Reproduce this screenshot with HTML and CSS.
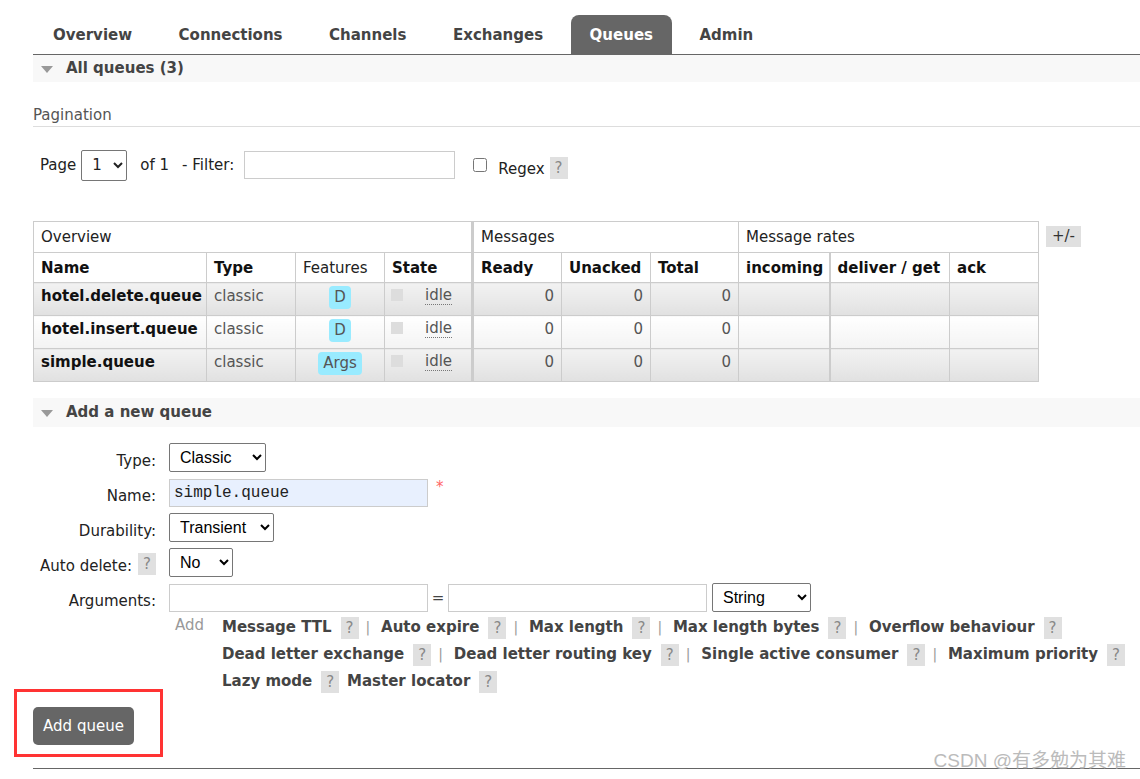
FILE: index.html
```html
<!DOCTYPE html>
<html>
<head>
<meta charset="utf-8">
<link rel="stylesheet" href="styles.css">
</head>
<body>
<div class="page">
  <nav class="tabs">
    <a class="tab">Overview</a>
    <a class="tab">Connections</a>
    <a class="tab">Channels</a>
    <a class="tab">Exchanges</a>
    <a class="tab active">Queues</a>
    <a class="tab">Admin</a>
  </nav>

  <div class="section-head"><span class="tri"></span>All queues (3)</div>

  <div class="pagination-title">Pagination</div>

  <div class="pager">
    <span>Page</span>
    <select class="page-select"><option>1</option></select>
    <span class="of">of 1</span>
    <span>- Filter:</span>
    <input class="filter" type="text">
    <input class="regex-box" type="checkbox">
    <span class="regex">Regex</span>
    <span class="help">?</span>
  </div>

  <div class="table-wrap">
    <table class="queues">
      <colgroup>
        <col style="width:173px"><col style="width:89px"><col style="width:89px"><col style="width:88px">
        <col style="width:89px"><col style="width:89px"><col style="width:88px">
        <col style="width:91px"><col style="width:120px"><col style="width:89px">
      </colgroup>
      <thead>
        <tr class="group">
          <th colspan="4">Overview</th>
          <th colspan="3" class="gsep">Messages</th>
          <th colspan="3">Message rates</th>
        </tr>
        <tr class="sub">
          <th>Name</th><th>Type</th><th class="normal">Features</th><th>State</th>
          <th class="gsep">Ready</th><th>Unacked</th><th>Total</th>
          <th>incoming</th><th class="rsep">deliver / get</th><th>ack</th>
        </tr>
      </thead>
      <tbody>
        <tr class="alt">
          <td class="qname">hotel.delete.queue</td><td class="muted">classic</td>
          <td class="center"><span class="badge">D</span></td>
          <td><span class="state"><span class="sq"></span><span class="idle">idle</span></span></td>
          <td class="num gsep">0</td><td class="num">0</td><td class="num">0</td>
          <td></td><td class="rsep"></td><td></td>
        </tr>
        <tr class="plain">
          <td class="qname">hotel.insert.queue</td><td class="muted">classic</td>
          <td class="center"><span class="badge">D</span></td>
          <td><span class="state"><span class="sq"></span><span class="idle">idle</span></span></td>
          <td class="num gsep">0</td><td class="num">0</td><td class="num">0</td>
          <td></td><td class="rsep"></td><td></td>
        </tr>
        <tr class="alt">
          <td class="qname">simple.queue</td><td class="muted">classic</td>
          <td class="center"><span class="badge">Args</span></td>
          <td><span class="state"><span class="sq"></span><span class="idle">idle</span></span></td>
          <td class="num gsep">0</td><td class="num">0</td><td class="num">0</td>
          <td></td><td class="rsep"></td><td></td>
        </tr>
      </tbody>
    </table>
    <span class="plusminus">+/-</span>
  </div>

  <div class="section-head second"><span class="tri"></span>Add a new queue</div>

  <form class="form">
    <label class="lbl">Type:</label>
    <div class="field"><select class="sel sel-type"><option>Classic</option></select></div>

    <label class="lbl">Name:</label>
    <div class="field"><input class="txt name" type="text" value="simple.queue"><span class="req">*</span></div>

    <label class="lbl">Durability:</label>
    <div class="field"><select class="sel sel-dur"><option>Transient</option></select></div>

    <label class="lbl">Auto delete: <span class="help">?</span></label>
    <div class="field"><select class="sel sel-no"><option>No</option></select></div>

    <label class="lbl">Arguments:</label>
    <div class="field">
      <input class="txt arg" type="text"><span class="eq">=</span><input class="txt arg" type="text">
      <select class="sel sel-str"><option>String</option></select>
    </div>

    <div></div>
    <div class="adds">
      <span class="add-word">Add</span>
      <div class="links">
        <span class="lnk">Message TTL</span><span class="help">?</span><span class="bar">|</span>
        <span class="lnk">Auto expire</span><span class="help">?</span><span class="bar">|</span>
        <span class="lnk">Max length</span><span class="help">?</span><span class="bar">|</span>
        <span class="lnk">Max length bytes</span><span class="help">?</span><span class="bar">|</span>
        <span class="lnk">Overflow behaviour</span><span class="help">?</span>
        <br>
        <span class="lnk">Dead letter exchange</span><span class="help">?</span><span class="bar">|</span>
        <span class="lnk">Dead letter routing key</span><span class="help">?</span><span class="bar">|</span>
        <span class="lnk">Single active consumer</span><span class="help">?</span><span class="bar">|</span>
        <span class="lnk">Maximum priority</span><span class="help">?</span>
        <br>
        <span class="lnk">Lazy mode</span><span class="help">?</span>
        <span class="lnk">Master locator</span><span class="help">?</span>
      </div>
    </div>
  </form>

  <div class="submit-row">
    <button class="btn" type="button">Add queue</button>
    <span class="highlight"></span>
  </div>

  <div class="footer-line"></div>
  <div class="watermark">CSDN @有多勉为其难</div>
</div>
</body>
</html>
```

FILE: styles.css
```css
* { box-sizing: border-box; }
html, body { margin: 0; padding: 0; background: #fff; }
body {
  font-family: "DejaVu Sans", Verdana, sans-serif;
  font-size: 15px;
  color: #444;
  width: 1140px;
  height: 779px;
  overflow: hidden;
}
.page { padding-left: 33px; position: relative; height: 779px; }

.tabs {
  display: flex;
  padding-top: 15px;
  padding-left: 1px;
  border-bottom: 1px solid #666;
  height: 55px;
  gap: 8.5px;
}
.tab {
  display: block;
  height: 39px;
  line-height: 40px;
  padding: 0 19px;
  font-weight: bold;
  font-size: 15px;
  color: #444;
  border-radius: 8px 8px 0 0;
}
.tab.active { background: #666; color: #fff; }

.section-head {
  height: 27px;
  line-height: 27px;
  background: #f8f8f8;
  font-weight: bold;
  font-size: 15px;
  color: #444;
  display: flex;
  align-items: center;
}
.tri {
  width: 0; height: 0;
  border-left: 6px solid transparent;
  border-right: 6px solid transparent;
  border-top: 7px solid #999;
  margin: 2px 13px 0 8px;
}

.pagination-title {
  margin-top: 24px;
  font-size: 15px;
  color: #555;
  border-bottom: 1px solid #ddd;
  height: 21px;
}

.pager {
  display: flex;
  align-items: center;
  margin-top: 22px;
  padding-left: 7px;
  font-size: 15px;
  color: #222;
  height: 32px;
}
.page-select {
  margin-left: 5px;
  width: 46px;
  height: 31px;
  font-family: "DejaVu Sans", Verdana, sans-serif;
  font-size: 15px;
  color: #222;
  border: 1px solid #767676;
  border-radius: 2px;
  background: #fff;
  padding-left: 6px;
}
.of { margin-left: 13px; margin-right: 13px; }
.filter {
  margin-left: 10px;
  width: 211px;
  height: 28px;
  border: 1px solid #ccc;
  padding: 0;
}
.regex-box { margin: 0 0 0 18px; width: 14px; height: 14px; }
.regex { margin-left: 11px; margin-top: 7px; }
.help {
  display: inline-block;
  background: #e0e0e0;
  color: #888;
  width: 18px;
  height: 22px;
  line-height: 22px;
  text-align: center;
  font-size: 15px;
  font-weight: normal;
  vertical-align: middle;
}
.pager .help { margin-left: 5px; margin-top: 6px; }

.table-wrap {
  margin-top: 40px;
  display: flex;
  align-items: flex-start;
}
.queues {
  border-collapse: collapse;
  table-layout: fixed;
  width: 1005px;
  font-size: 15px;
}
.queues th, .queues td {
  border: 1px solid #ccc;
  padding: 0 7px;
  text-align: left;
  vertical-align: middle;
}
.queues tr.group th {
  font-weight: normal;
  height: 31px;
  color: #222;
}
.queues tr.sub th {
  font-weight: bold;
  font-size: 15px;
  height: 30px;
  color: #111;
}
.queues tr.sub th.normal { font-weight: normal; color: #222; }
.queues .gsep { border-left: 3px solid #ccc; }
.queues .rsep { border-left: 2px solid #ccc; }
.queues tbody tr { height: 33px; }
.queues tbody td {
  vertical-align: top;
  padding-top: 3px;
  padding-bottom: 0;
  line-height: 20px;
}
.queues tr.alt td { background: linear-gradient(#f2f2f2, #e1e1e1); }
.queues tr.plain td { background: linear-gradient(#ffffff, #f3f3f3); }
.qname { font-weight: bold; font-size: 15px; color: #111; }
.muted { color: #555; }
.center { text-align: center !important; }
.num { text-align: right !important; color: #555; }
.badge {
  display: inline-block;
  background: #99ebff;
  border-radius: 4px;
  padding: 0 5px;
  height: 23px;
  line-height: 23px;
  color: #555;
  vertical-align: top;
}
.state { display: flex; align-items: flex-start; }
.sq { width: 12px; height: 12px; background: #ddd; margin-left: -1px; margin-top: 3px; }
.idle {
  margin-left: 22px;
  color: #555;
  border-bottom: 1px dotted #777;
  line-height: 18px;
}
.plusminus {
  margin-left: 7px;
  margin-top: 5px;
  background: #e0e0e0;
  color: #333;
  width: 35px;
  height: 21px;
  line-height: 21px;
  text-align: center;
  font-size: 15px;
}

.section-head.second { margin-top: 16px; height: 29px; }

.form {
  display: grid;
  grid-template-columns: 123px 1fr;
  column-gap: 13px;
  row-gap: 6px;
  margin-top: 16px;
  align-items: center;
}
.lbl {
  text-align: right;
  font-size: 15px;
  color: #222;
  padding-top: 6px;
  display: flex;
  justify-content: flex-end;
  align-items: center;
  white-space: nowrap;
}
.lbl .help { margin-left: 6px; margin-top: -4px; }
.field { display: flex; align-items: center; height: 29px; }
.sel {
  height: 29px;
  font-family: "Liberation Sans", Arial, sans-serif;
  font-size: 16px;
  color: #000;
  border: 1px solid #767676;
  border-radius: 2px;
  background: #fff;
  padding-left: 6px;
}
.sel-type { width: 97px; }
.sel-dur { width: 105px; }
.sel-no { width: 64px; }
.sel-str { width: 99px; margin-left: 5px; }
.txt {
  height: 28px;
  border: 1px solid #ccc;
  padding: 0 4px;
  background: #fff;
}
.name {
  width: 259px;
  background: #e8f0fe;
  font-family: "Liberation Mono", "Courier New", monospace;
  font-size: 16px;
  color: #222;
}
.req { color: #f66; margin-left: 8px; margin-top: -12px; font-size: 15px; }
.arg { width: 259px; }
.eq { width: 20px; text-align: center; color: #444; }

.adds {
  display: flex;
  align-items: flex-start;
  margin-top: -1px;
}
.add-word { color: #999; width: 53px; padding-left: 6px; font-size: 15px; line-height: 20px; margin-top: -2px; }
.links { line-height: 27px; font-size: 15px; margin-top: -3px; }
.lnk { font-weight: bold; color: #444; }
.links .help { margin-left: 9px; margin-right: 3px; }
.bar { color: #999; margin: 0 6px 0 4px; font-weight: normal; font-size: 14px; }

.submit-row {
  position: relative;
  margin-top: 12px;
  height: 38px;
}
.btn {
  width: 101px;
  height: 38px;
  background: #666;
  color: #fff;
  border: none;
  border-radius: 5px;
  font-family: "DejaVu Sans", Verdana, sans-serif;
  font-size: 15px;
  padding: 0;
}
.highlight {
  position: absolute;
  left: -19px;
  top: -18px;
  width: 149px;
  height: 68px;
  border: 3px solid #f33;
}
.footer-line {
  margin-top: 23px;
  border-top: 1px solid #666;
}
.watermark {
  position: absolute;
  right: 14px;
  top: 745px;
  font-family: "Liberation Sans", "Noto Sans CJK SC", sans-serif;
  font-size: 19px;
  color: #bbb;
}
```
